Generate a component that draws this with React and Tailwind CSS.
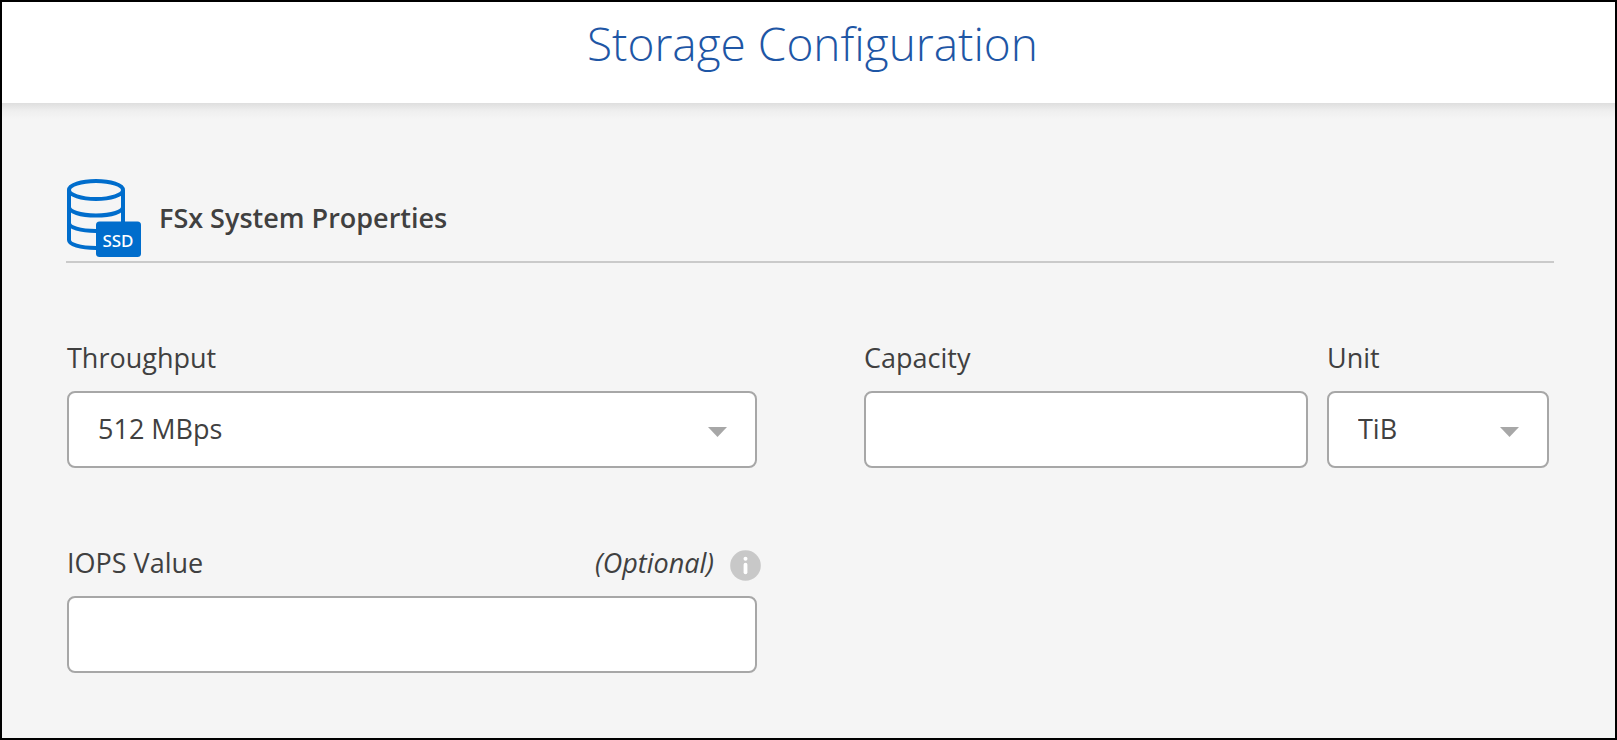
const controlClass =
  "block h-[77px] w-full appearance-none rounded-lg border-2 border-[#a7a7a7] bg-white px-[29px] text-[27px] text-[#404040] outline-none focus:border-[#006dcc]";
const labelClass = "block text-[27px] leading-9";

function DiskIcon() {
  return (
    <svg width="75" height="78" viewBox="0 0 75 78" aria-hidden="true" className="shrink-0">
      <g fill="none" stroke="#006dcc" strokeWidth="4">
        <ellipse cx="30" cy="11" rx="27" ry="9" />
        <path d="M3 11v50c0 4.500 11 8 27 8M57 11v34" />
        <path d="M3 28c0 4.700 11 8.500 27 8.500s27-3.800 27-8.500" />
        <path d="M3 44c0 4.500 11 8 27 8" />
      </g>
      <rect x="30" y="42.500" width="45" height="35.500" rx="3.500" fill="#006dcc" />
      <text x="52" y="68" textAnchor="middle" fill="#fff" fontSize="17" fontWeight="500" fontFamily="'Noto Sans', 'Open Sans', sans-serif">
        SSD
      </text>
    </svg>
  );
}

function InfoIcon() {
  return (
    <svg width="31" height="31" viewBox="0 0 31 31" aria-hidden="true">
      <circle cx="15.500" cy="15.500" r="15.300" fill="#c8c8c8" />
      <circle cx="15.500" cy="8.800" r="2" fill="#fff" />
      <path d="M15.500 14.700v7.600" stroke="#fff" strokeWidth="3.800" strokeLinecap="round" />
    </svg>
  );
}

function SelectField({ id, label, options }) {
  return (
    <div>
      <label htmlFor={id} className={labelClass}>{label}</label>
      <div className="relative mt-[15px]">
        <select id={id} className={controlClass}>
          {options.map((option) => (
            <option key={option}>{option}</option>
          ))}
        </select>
        <svg
          width="19"
          height="10"
          viewBox="0 0 19 10"
          aria-hidden="true"
          className="pointer-events-none absolute right-[30px] top-[36px]"
        >
          <path d="M0 0h19L9.500 10z" fill="#a7a7a7" />
        </svg>
      </div>
    </div>
  );
}

export default function App() {
  return (
    <div className="flex min-h-screen flex-col border-2 border-black bg-[#f5f5f5] font-['Open_Sans',sans-serif] text-[#404040]">
      <header className="bg-white pb-7 pl-2 pt-[9px] text-center">
        <h1 className="text-[46px] font-light leading-[64px] text-[#1e56a5]">Storage Configuration</h1>
      </header>
      <div className="h-4 bg-linear-to-b from-[#dedede] via-[#efefef] to-[#f5f5f5]" />
      <main className="pb-14 pl-16 pr-[61px] pt-[60px]">
        <div className="flex items-center gap-[18px] border-b-2 border-[#cacaca] pb-1">
          <DiskIcon />
          <h2 className="text-[27px] font-semibold leading-9">FSx System Properties</h2>
        </div>
        <form className="mt-[77px] grid grid-cols-[690fr_685fr] gap-x-[107px] gap-y-[77px] pl-px pr-[5px]">
          <SelectField id="throughput" label="Throughput" options={["512 MBps", "1024 MBps", "2048 MBps"]} />
          <div className="grid grid-cols-[2fr_1fr] gap-[19px]">
            <div>
              <label htmlFor="capacity" className={labelClass}>Capacity</label>
              <input id="capacity" type="text" className={`mt-[15px] ${controlClass}`} />
            </div>
            <SelectField id="unit" label="Unit" options={["TiB", "GiB"]} />
          </div>
          <div>
            <div className="-mr-1 flex items-center">
              <label htmlFor="iops" className={labelClass}>IOPS Value</label>
              <span className="ml-auto mr-4 text-[27px] italic leading-9">(Optional)</span>
              <button type="button" aria-label="About IOPS value" className="mt-1">
                <InfoIcon />
              </button>
            </div>
            <input id="iops" type="text" className={`mt-[15px] ${controlClass}`} />
          </div>
        </form>
      </main>
    </div>
  );
}
